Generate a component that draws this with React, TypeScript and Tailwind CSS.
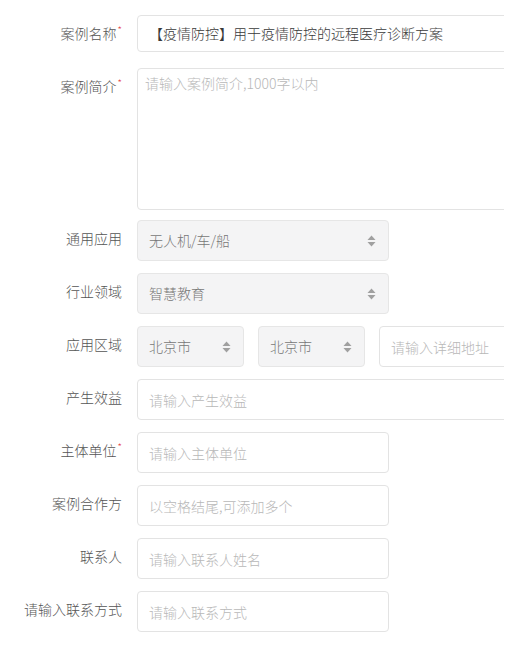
import React from 'react';

const SortArrows: React.FC = () => (
    <svg width="9" height="12" viewBox="0 0 9 12" className="shrink-0">
        <path d="M4.5 0.5 L8.5 5 L0.5 5 Z" fill="#a0a0a0" />
        <path d="M0.5 7 L8.5 7 L4.5 11.5 Z" fill="#a0a0a0" />
    </svg>
);

interface RowProps {
    label: string;
    required?: boolean;
    className?: string;
    children: React.ReactNode;
}

const Row: React.FC<RowProps> = ({ label, required, className, children }) => (
    <div className={`flex ${className ?? ''}`}>
        <div className="w-[122px] shrink-0 text-right pt-[8px] text-[14px] leading-[20px] text-[#555] whitespace-nowrap">
            {label}
            {required && <span className="relative -top-[5px] ml-[1px] text-[10px] text-[#e5393b]">*</span>}
        </div>
        <div className="ml-[15px] flex-1 min-w-0">{children}</div>
    </div>
);

const FakeSelect: React.FC<{ value: string; width: string }> = ({ value, width }) => (
    <div className={`${width} h-[41px] shrink-0 flex items-center justify-between pl-[11px] pr-[12px] rounded-[4px] border border-[#e6e6e6] bg-[#f4f4f5] text-[14px] text-[#777]`}>
        <span>{value}</span>
        <SortArrows />
    </div>
);

const inputCls = 'h-[41px] rounded-[4px] border border-[#e3e3e3] bg-white px-[11px] text-[14px] text-[#333] outline-none placeholder:text-[#b8b8b8]';

export default function App() {
    return (
        <div className="w-[528px] h-[647px] bg-white font-light font-['Noto_Sans_CJK_SC','Noto_Sans',sans-serif]">
            <div className="w-[504px] h-full overflow-hidden">
                <Row label="案例名称" required className="pt-[15px]">
                    <div className="w-[420px] h-[37px] flex items-center rounded-[4px] border border-[#e3e3e3] bg-white px-[11px] text-[14px] text-[#3a3a3a]">
                        【疫情防控】用于疫情防控的远程医疗诊断方案
                    </div>
                </Row>
                <Row label="案例简介" required className="mt-[16px]">
                    <textarea
                        readOnly
                        placeholder="请输入案例简介,1000字以内"
                        className="block w-[420px] h-[142px] resize-none rounded-[4px] border border-[#e3e3e3] bg-white px-[7px] py-[4px] text-[14px] leading-[20px] outline-none placeholder:text-[#b8b8b8]"
                    />
                </Row>
                <Row label="通用应用" className="mt-[10px]">
                    <FakeSelect value="无人机/车/船" width="w-[252px]" />
                </Row>
                <Row label="行业领域" className="mt-[12px]">
                    <FakeSelect value="智慧教育" width="w-[252px]" />
                </Row>
                <Row label="应用区域" className="mt-[12px]">
                    <div className="flex gap-[14px]">
                        <FakeSelect value="北京市" width="w-[107px]" />
                        <FakeSelect value="北京市" width="w-[107px]" />
                        <input readOnly placeholder="请输入详细地址" className={`${inputCls} w-[200px] shrink-0`} />
                    </div>
                </Row>
                <Row label="产生效益" className="mt-[12px]">
                    <input readOnly placeholder="请输入产生效益" className={`${inputCls} w-[420px]`} />
                </Row>
                <Row label="主体单位" required className="mt-[12px]">
                    <input readOnly placeholder="请输入主体单位" className={`${inputCls} w-[252px]`} />
                </Row>
                <Row label="案例合作方" className="mt-[12px]">
                    <input readOnly placeholder="以空格结尾,可添加多个" className={`${inputCls} w-[252px]`} />
                </Row>
                <Row label="联系人" className="mt-[12px]">
                    <input readOnly placeholder="请输入联系人姓名" className={`${inputCls} w-[252px]`} />
                </Row>
                <Row label="请输入联系方式" className="mt-[12px]">
                    <input readOnly placeholder="请输入联系方式" className={`${inputCls} w-[252px]`} />
                </Row>
            </div>
        </div>
    );
}
